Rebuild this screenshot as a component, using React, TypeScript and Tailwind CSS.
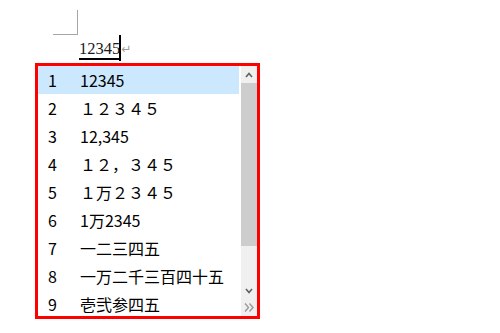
import React from 'react';

const items = [
  '12345',
  '１２３４５',
  '12,345',
  '１２，３４５',
  '１万２３４５',
  '1万2345',
  '一二三四五',
  '一万二千三百四十五',
  '壱弐参四五',
];

function Chevron({ dir }: { dir: 'up' | 'down' }) {
  return (
    <svg width="8" height="6" viewBox="0 0 8 6">
      {dir === 'up' ? (
        <polyline points="1,5 4,1.5 7,5" fill="none" stroke="#606060" strokeWidth="1.6" />
      ) : (
        <polyline points="1,1 4,4.5 7,1" fill="none" stroke="#606060" strokeWidth="1.6" />
      )}
    </svg>
  );
}

function DoubleChevron() {
  return (
    <svg width="10" height="9" viewBox="0 0 10 9">
      <polyline points="1,0.5 4.5,4.5 1,8.5" fill="none" stroke="#9a9a9a" strokeWidth="1.4" />
      <polyline points="5.5,0.5 9,4.5 5.5,8.5" fill="none" stroke="#9a9a9a" strokeWidth="1.4" />
    </svg>
  );
}

function Scrollbar() {
  return (
    <div className="flex w-[16px] shrink-0 flex-col bg-[#f0f0f0]">
      <div className="flex h-[17px] items-center justify-center">
        <Chevron dir="up" />
      </div>
      <div className="h-[163px] bg-[#cdcdcd]" />
      <div className="flex-1" />
      <div className="flex h-[17px] items-center justify-center">
        <Chevron dir="down" />
      </div>
      <div className="flex h-[17px] items-center justify-center">
        <DoubleChevron />
      </div>
    </div>
  );
}

export default function App() {
  return (
    <div className="h-[333px] w-[500px] overflow-hidden bg-white">
      {/* page corner mark */}
      <div className="ml-[53px] mt-[10px] h-[25px] w-[25px] border-b border-r border-[#a6a6a6]" />

      {/* typed text line */}
      <div className="ml-[79px] flex h-[28px] items-start pt-[5px]">
        <span className="relative inline-block border-b-2 border-black font-['Liberation_Serif',serif] text-[16.5px] leading-[18px] text-[#1a1a1a]">
          12345
          <span className="absolute right-[-1px] top-[-5px] h-[26px] w-[2px] bg-black" />
        </span>
        <span className="ml-[1px] mt-[2px] font-['DejaVu_Sans',sans-serif] text-[12px] leading-[14px] text-[#9a9a9a]">
          ↵
        </span>
      </div>

      {/* candidate list */}
      <div className="ml-[35px] flex h-[256px] w-[225px] overflow-hidden border-[3px] border-[#ff0000] bg-white">
        <div className="flex-1 overflow-hidden font-['Noto_Sans_CJK_SC',sans-serif] text-[16px] leading-[20px] text-black">
          {items.map((text, i) => (
            <div
              key={i}
              className={`flex h-[28px] items-center ${i === 0 ? 'bg-[#cce8ff]' : ''}`}
            >
              <span className="w-[42px] shrink-0 pl-[10px]">{i + 1}</span>
              <span className="whitespace-nowrap">{text}</span>
            </div>
          ))}
        </div>
        <div className="w-[2px] shrink-0" />
        <Scrollbar />
      </div>
    </div>
  );
}
